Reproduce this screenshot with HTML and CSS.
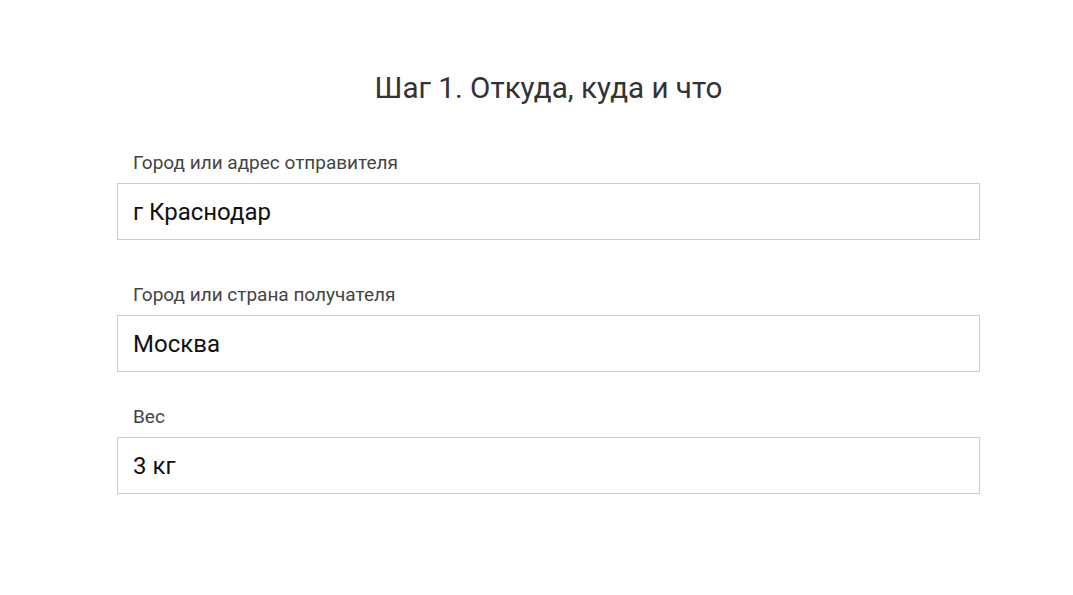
FILE: index.html
```html
<!DOCTYPE html>
<html lang="ru">
<head>
<meta charset="utf-8">
<title>Шаг 1</title>
<link rel="stylesheet" href="styles.css">
</head>
<body>
<main class="form">
  <h1 class="title">Шаг 1. Откуда, куда и что</h1>
  <div class="field field-first">
    <label class="label">Город или адрес отправителя</label>
    <div class="input">г Краснодар</div>
  </div>
  <div class="field field-second">
    <label class="label">Город или страна получателя</label>
    <div class="input">Москва</div>
  </div>
  <div class="field">
    <label class="label">Вес</label>
    <div class="input">3 кг</div>
  </div>
</main>
</body>
</html>
```
FILE: styles.css
```css
html, body {
  margin: 0;
  padding: 0;
  background: #fff;
}
body {
  font-family: Roboto, "Noto Sans", sans-serif;
}
.form {
  width: 863px;
  margin-left: 117px;
  padding-top: 70px;
  display: flex;
  flex-direction: column;
}
.title {
  margin: 0 0 46px;
  font-size: 29.6px;
  line-height: 36px;
  font-weight: 400;
  color: #333;
  text-align: center;
}
.field {
  display: flex;
  flex-direction: column;
  margin-bottom: 44px;
}
.field-second {
  margin-bottom: 34px;
}
.label {
  padding-left: 16px;
  font-size: 19px;
  line-height: 22px;
  color: #444;
  margin-bottom: 9px;
}
.input {
  box-sizing: border-box;
  height: 57px;
  border: 1px solid #ccc;
  padding: 0 15px;
  display: flex;
  align-items: center;
  font-size: 24px;
  color: #111;
}
```
